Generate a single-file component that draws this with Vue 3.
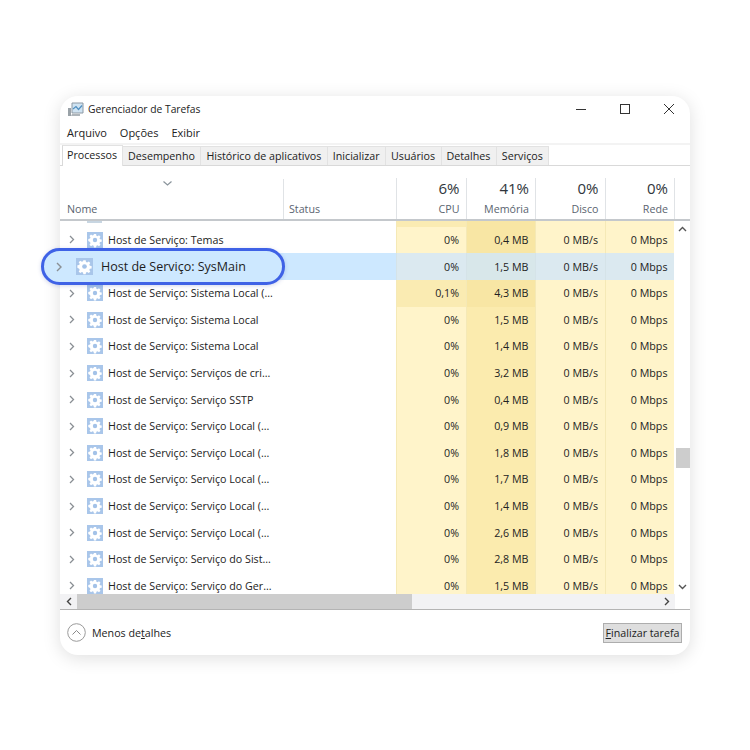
<script setup>
const rows = [
  { name: 'Host de Serviço: Temas', cpu: '0%', mem: '0,4 MB', memHot: true },
  { name: 'Host de Serviço: SysMain', cpu: '0%', mem: '1,5 MB', selected: true },
  { name: 'Host de Serviço: Sistema Local (...', cpu: '0,1%', mem: '4,3 MB', hot: true, memHot: true },
  { name: 'Host de Serviço: Sistema Local', cpu: '0%', mem: '1,5 MB' },
  { name: 'Host de Serviço: Sistema Local', cpu: '0%', mem: '1,4 MB' },
  { name: 'Host de Serviço: Serviços de cri...', cpu: '0%', mem: '3,2 MB' },
  { name: 'Host de Serviço: Serviço SSTP', cpu: '0%', mem: '0,4 MB' },
  { name: 'Host de Serviço: Serviço Local (...', cpu: '0%', mem: '0,9 MB' },
  { name: 'Host de Serviço: Serviço Local (...', cpu: '0%', mem: '1,8 MB' },
  { name: 'Host de Serviço: Serviço Local (...', cpu: '0%', mem: '1,7 MB' },
  { name: 'Host de Serviço: Serviço Local (...', cpu: '0%', mem: '1,4 MB' },
  { name: 'Host de Serviço: Serviço Local (...', cpu: '0%', mem: '2,6 MB' },
  { name: 'Host de Serviço: Serviço do Sist...', cpu: '0%', mem: '2,8 MB' },
  { name: 'Host de Serviço: Serviço do Ger...', cpu: '0%', mem: '1,5 MB' },
]
const tabs = ['Processos', 'Desempenho', 'Histórico de aplicativos', 'Inicializar', 'Usuários', 'Detalhes', 'Serviços']
const heads = [
  { pct: '6%', label: 'CPU' },
  { pct: '41%', label: 'Memória' },
  { pct: '0%', label: 'Disco' },
  { pct: '0%', label: 'Rede' },
]
const gear = 'M6.9 2h2.2l.3 1.7 1.1.5 1.5-1 1.5 1.5-1 1.5.5 1.1 1.7.3v2.2l-1.7.3-.5 1.1 1 1.5-1.5 1.5-1.5-1-1.1.5-.3 1.7H6.9l-.3-1.7-1.1-.5-1.5 1-1.5-1.5 1-1.5-.5-1.1L1.3 9.1V6.9L3 6.6l.5-1.1-1-1.5L4 2.5l1.5 1 1.1-.5z'
</script>

<template>
  <div class="page">
    <div class="window">
      <div class="titlebar">
        <svg class="appicon" width="17" height="15" viewBox="0 0 17 15">
          <path d="M5 1h11v10H5z" fill="#cfe3f2" stroke="#8d99a4" />
          <path d="M6 7l3-2.5 2.5 3L15 3.500" fill="none" stroke="#4f8fc0" stroke-width="1.2" />
          <path d="M1 6h3v8H1z" fill="#9aa2a8" />
          <path d="M5 12h8v2H4z" fill="#aeb5ba" />
        </svg>
        <span class="title">Gerenciador de Tarefas</span>
        <div class="controls">
          <svg width="12" height="12" viewBox="0 0 12 12"><path d="M1 6.5h10" stroke="#333" /></svg>
          <svg width="12" height="12" viewBox="0 0 12 12"><rect x="1.500" y="1.500" width="9" height="9" fill="none" stroke="#333" /></svg>
          <svg width="12" height="12" viewBox="0 0 12 12"><path d="M1 1l10 10M11 1L1 11" stroke="#333" /></svg>
        </div>
      </div>
      <div class="menubar">
        <span>Arquivo</span><span>Opções</span><span>Exibir</span>
      </div>
      <div class="tabs">
        <span v-for="(t, i) in tabs" :key="t" class="tab" :class="{ active: i === 0 }">{{ t }}</span>
      </div>
      <div class="thead">
        <div class="th-name">
          <svg class="sort" width="9" height="5" viewBox="0 0 9 5"><path d="M.5.5l4 3.500 4-3.500" fill="none" stroke="#8a949c" stroke-width="1.2" /></svg>
          <span>Nome</span>
        </div>
        <div class="th-status"><span>Status</span></div>
        <div v-for="h in heads" :key="h.label" class="th-num">
          <span class="pct">{{ h.pct }}</span>
          <span class="lbl">{{ h.label }}</span>
        </div>
        <div class="th-gap"></div>
      </div>
      <div class="tbody">
        <div class="rows">
          <div class="spacer">
            <i class="c-name"><b class="peek"></b></i><i class="c-status"></i><i class="c-num hot"></i><i class="c-num warm2 memhot"></i><i class="c-num"></i><i class="c-num"></i>
          </div>
          <div v-for="r in rows" :key="r.name + r.mem" class="row" :class="{ selected: r.selected }">
            <div class="c-name">
              <template v-if="!r.selected">
                <svg class="chev" width="6" height="9" viewBox="0 0 6 9"><path d="M1 1l3.500 3.500L1 8" fill="none" stroke="#8a8f94" stroke-width="1.3" /></svg>
                <svg class="gear" width="16" height="16" viewBox="0 0 16 16">
                  <rect width="16" height="16" fill="#a9c6ea" />
                  <path :d="gear" fill="#fff" />
                  <circle cx="8" cy="8" r="2.200" fill="#a3c2e8" />
                </svg>
                <span>{{ r.name }}</span>
              </template>
            </div>
            <div class="c-status"></div>
            <div class="c-num" :class="{ hot: r.hot }">{{ r.cpu }}</div>
            <div class="c-num warm2" :class="{ memhot: r.memHot }">{{ r.mem }}</div>
            <div class="c-num">0 MB/s</div>
            <div class="c-num">0 Mbps</div>
          </div>
        </div>
        <div class="vscroll">
          <svg width="9" height="6" viewBox="0 0 9 6"><path d="M1 5l3.500-3.500L8 5" fill="none" stroke="#555" stroke-width="1.4" /></svg>
          <div class="vthumb"></div>
          <svg width="9" height="6" viewBox="0 0 9 6"><path d="M1 1l3.500 3.500L8 1" fill="none" stroke="#555" stroke-width="1.4" /></svg>
        </div>
        <div class="pill">
          <svg class="chev" width="7" height="10" viewBox="0 0 7 10"><path d="M1 1l4 4-4 4" fill="none" stroke="#8a8f94" stroke-width="1.4" /></svg>
          <svg class="gear" width="17" height="17" viewBox="0 0 16 16">
            <rect width="16" height="16" fill="#a9c6ea" />
            <path :d="gear" fill="#fff" />
            <circle cx="8" cy="8" r="2.200" fill="#a3c2e8" />
          </svg>
          <span>Host de Serviço: SysMain</span>
        </div>
      </div>
      <div class="hscrollrow">
        <div class="hscroll">
          <svg width="6" height="9" viewBox="0 0 6 9"><path d="M5 1L1.500 4.500 5 8" fill="none" stroke="#444" stroke-width="1.4" /></svg>
          <div class="hthumb"></div>
          <svg class="hright" width="6" height="9" viewBox="0 0 6 9"><path d="M1 1l3.500 3.500L1 8" fill="none" stroke="#444" stroke-width="1.4" /></svg>
        </div>
      </div>
      <div class="footer">
        <svg width="19" height="19" viewBox="0 0 19 19">
          <circle cx="9.500" cy="9.500" r="8.800" fill="none" stroke="#9a9a9a" />
          <path d="M5.500 11.500l4-4 4 4" fill="none" stroke="#8a8a8a" />
        </svg>
        <span class="less">Menos de<u>t</u>alhes</span>
        <button class="end"><u>F</u>inalizar tarefa</button>
      </div>
    </div>
  </div>
</template>

<style>
html, body { margin: 0; background: #fff; }
</style>

<style scoped>
.page {
  width: 750px;
  height: 750px;
  padding: 96px 60px 0;
  box-sizing: border-box;
  font-family: "Open Sans", "Noto Sans", sans-serif;
  font-size: 10.7px;
  color: #222;
}
.window {
  width: 630px;
  height: 559px;
  background: #fff;
  border-radius: 18px;
  box-shadow: 0 3px 18px rgba(0, 0, 0, 0.13);
  display: flex;
  flex-direction: column;
  position: relative;
}
.titlebar {
  height: 26px;
  display: flex;
  align-items: center;
  padding-left: 7px;
  flex: none;
}
.appicon { margin-right: 4px; }
.title { font-size: 10.3px; }
.controls {
  margin-left: auto;
  display: flex;
  gap: 32px;
  padding-right: 15px;
}
.menubar {
  height: 21px;
  display: flex;
  align-items: center;
  gap: 13px;
  padding-left: 7px;
  flex: none;
  font-size: 11px;
  border-bottom: 2px solid #f3f3f3;
  box-sizing: content-box;
}
.tabs {
  height: 19px;
  margin-top: 1px;
  display: flex;
  align-items: stretch;
  border-bottom: 1px solid #d9d9d9;
  padding-left: 2px;
  box-sizing: content-box;
  flex: none;
}
.tab {
  padding: 0 5.5px 0 5px;
  display: flex;
  align-items: center;
  background: #f0f0f0;
  border: 1px solid #e2e2e2;
  border-left: none;
  border-bottom: none;
  white-space: nowrap;
}
.tab.active {
  background: #fff;
  border-left: 1px solid #d9d9d9;
  height: 21px;
  box-sizing: border-box;
  margin-top: -1px;
  padding: 0 5px 3px 4px;
  z-index: 1;
}
.thead {
  height: 53px;
  display: flex;
  border-bottom: 2px solid #c4c8cc;
  box-sizing: content-box;
  flex: none;
  color: #5a6470;
}
.th-name {
  width: 223px;
  box-sizing: border-box;
  position: relative;
  display: flex;
  align-items: flex-end;
  padding: 0 0 3px 7px;
}
.sort { position: absolute; left: 103px; top: 15px; }
.th-status {
  width: 113px;
  box-sizing: border-box;
  padding: 0 0 3px 5px;
  display: flex;
  align-items: flex-end;
  border-left: 1px solid #e0e3e6;
  margin-top: 13px;
}
.th-num {
  width: 69.5px;
  box-sizing: border-box;
  padding: 2px 6px 3px 0;
  display: flex;
  flex-direction: column;
  align-items: flex-end;
  justify-content: space-between;
  border-left: 1px solid #e0e3e6;
  margin-top: 12px;
}
.pct { font-size: 15px; line-height: 17px; color: #30363c; }
.th-gap { flex: 1; border-left: 1px solid #e0e3e6; margin-top: 12px; }
.tbody {
  flex: none;
  height: 373px;
  display: flex;
  position: relative;
}
.rows {
  width: 615px;
  height: 373px;
  overflow: hidden;
}
.spacer, .row {
  display: flex;
  width: 615px;
}
.spacer { height: 5.7px; }
.spacer i { display: block; }
.peek {
  display: block;
  width: 15px;
  height: 2px;
  margin-left: 18px;
  background: #c8d6e2;
}
.row { height: 26.62px; align-items: stretch; }
.c-name {
  width: 223px;
  display: flex;
  align-items: center;
  flex: none;
  padding-left: 9px;
  box-sizing: border-box;
}
.c-name .chev { margin-right: 12px; }
.c-name .gear { margin-right: 5px; }
.c-status { width: 113px; flex: none; }
.c-num {
  width: 69.5px;
  flex: none;
  display: flex;
  align-items: center;
  justify-content: flex-end;
  padding-right: 6.5px;
  box-sizing: border-box;
  background: #fff4ca;
  border-left: 1px solid #f5e9b6;
}
.c-num.warm2 { background: #fbebae; }
.c-num.hot { background: #faebb2; }
.c-num.memhot { background: #f8e6a4; }
.row.selected .c-name,
.row.selected .c-status { background: #cde8ff; }
.row.selected .c-num { background: #dbe9f0; border-left-color: #d5e3e8; }
.row.selected .warm2 { background: #d8e7ea; }
.vscroll {
  width: 15px;
  flex: none;
  display: flex;
  flex-direction: column;
  align-items: center;
  justify-content: space-between;
  padding: 5px 0 4px;
  box-sizing: border-box;
  position: relative;
}
.vthumb {
  position: absolute;
  top: 227px;
  left: 1px;
  width: 14px;
  height: 20px;
  background: #cdcdcd;
}
.pill {
  position: absolute;
  left: -19px;
  top: 27px;
  width: 244px;
  height: 37px;
  box-sizing: border-box;
  border: 3px solid #3f62e6;
  border-radius: 19px;
  background: #cde8ff;
  display: flex;
  align-items: center;
  padding-left: 12px;
  font-size: 12.5px;
  color: #1c1c1c;
  box-shadow: 0 1px 4px rgba(40, 60, 160, 0.2);
}
.pill .chev { margin-right: 13px; }
.pill .gear { margin-right: 8px; }
.hscrollrow {
  height: 15px;
  flex: none;
}
.hscroll {
  width: 615px;
  height: 15px;
  display: flex;
  align-items: center;
  padding: 0 5px 0 6px;
  box-sizing: border-box;
  background: #f2f2f4;
}
.hthumb { width: 335px; height: 100%; margin-left: 5px; background: #cdcdcd; }
.hright { margin-left: auto; margin-right: 0; }
.footer {
  flex: 1;
  display: flex;
  align-items: center;
  padding: 0 8px 0 7px;
  border-top: 1px solid #b4b4b4;
  gap: 6px;
}
.end {
  margin-left: auto;
  font: inherit;
  color: #222;
  width: 79px;
  height: 20px;
  padding: 0;
  background: #dedede;
  border: 1px solid #adadad;
  border-radius: 0;
}
</style>
